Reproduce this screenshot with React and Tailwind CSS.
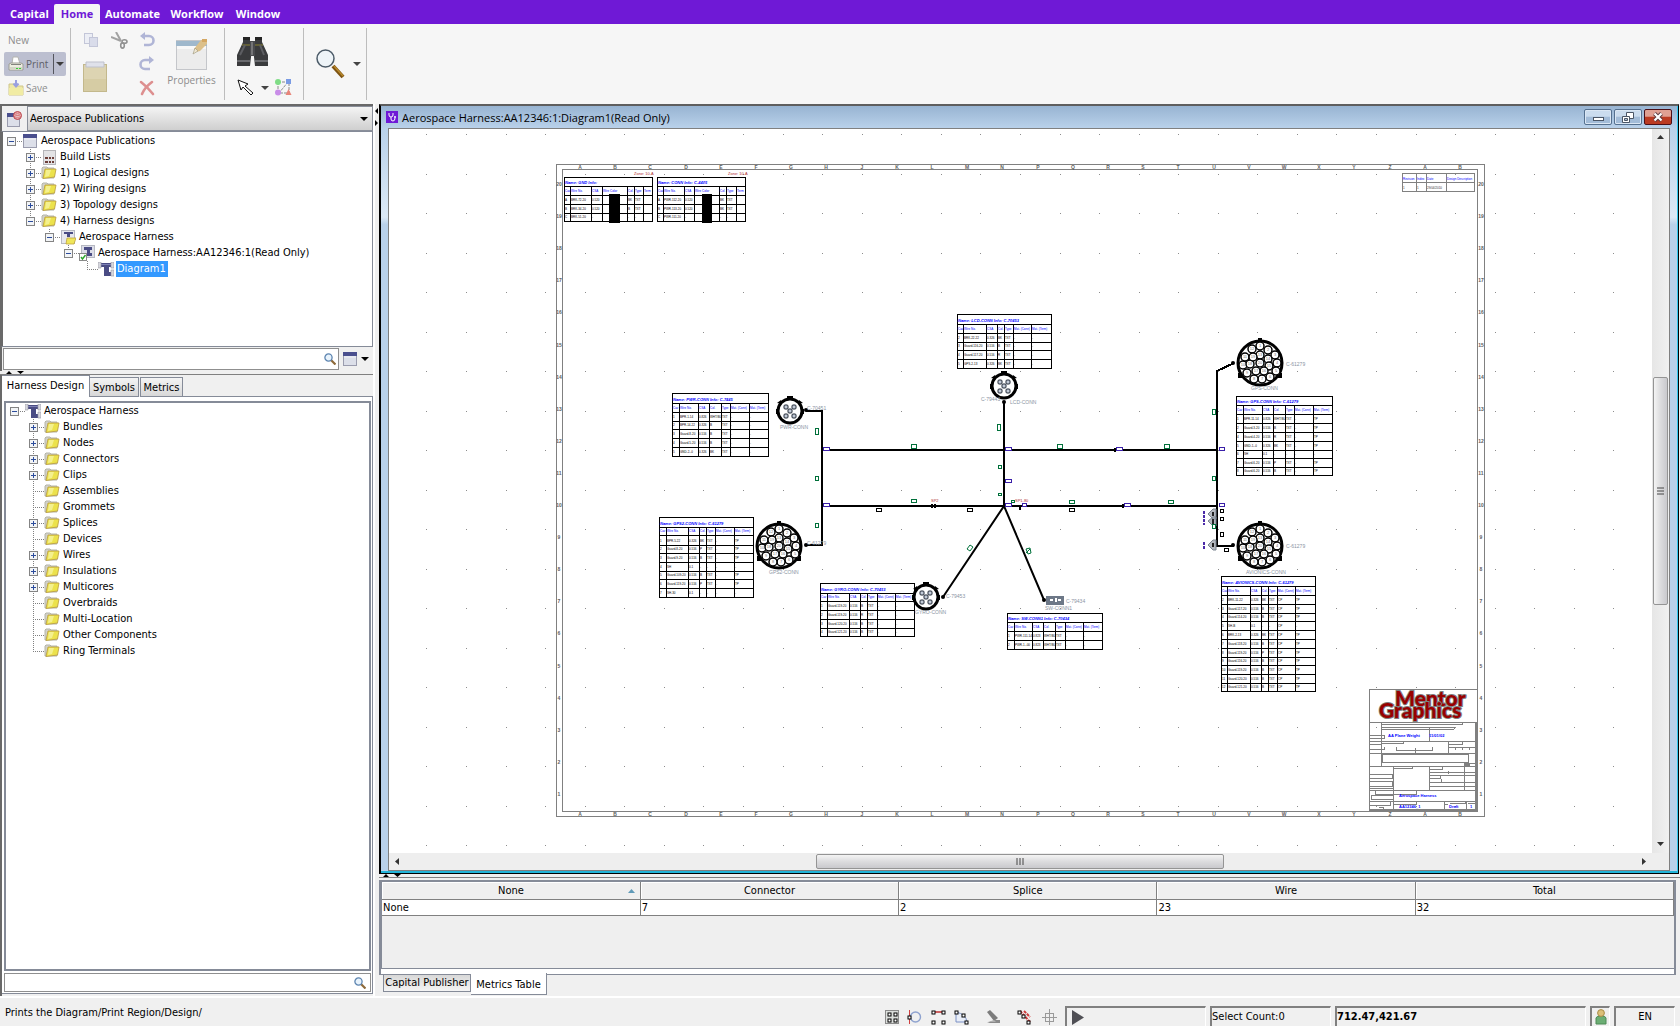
import React from "react";

/* ---------- small icons ---------- */

const Caret = ({ className = "" }) => (
  <svg width="8" height="4" viewBox="0 0 8 4" className={className} aria-hidden="true">
    <path d="M0 0h8L4 4z" fill="currentColor" />
  </svg>
);

const FolderIcon = () => (
  <svg width="16" height="14" viewBox="0 0 16 14" aria-hidden="true">
    <path d="M1 2 2 1h4l1 1h6v10H1z" fill="#d2d2ca" stroke="#b4b4a8" />
    <path d="M4 3h11l-1.500 8L2 12.500z" fill="#ece24c" stroke="#b99a3c" strokeWidth=".8" />
    <path d="M5 4h5l-2 6-4 1z" fill="#f4f08e" />
  </svg>
);

const WindowIcon = () => (
  <svg width="14" height="14" viewBox="0 0 14 14" aria-hidden="true">
    <rect x=".5" y=".5" width="13" height="13" fill="#dcdfe9" stroke="#9a9cae" />
    <rect width="14" height="4" fill="#4a4f8e" />
    <path d="M1 5h12" stroke="#f2f3f8" />
  </svg>
);

const HarnessIcon = () => (
  <svg width="16" height="15" viewBox="0 0 16 15" aria-hidden="true">
    <path d="M2 1h12v4h-3v5h3v4H6V5H2z" fill="#4a4c84" />
    <path d="M3 2h10v1H3z" fill="#7d80b4" />
    <path d="M0 0h3v6H0zM13 0h3v6h-3zM13 8h3v6h-3z" fill="#d7d8de" stroke="#9799a2" strokeWidth=".6" />
  </svg>
);

const BuildIcon = () => (
  <svg width="13" height="15" viewBox="0 0 13 15" aria-hidden="true">
    <rect x=".5" y=".5" width="12" height="14" fill="#e3e3e5" stroke="#b4b4b8" />
    <path d="M2 7h3v2H2zM6 7h2v2H6zM9 7h2v2H9zM2 11h3v2H2zM6 11h2v2H6zM9 11h2v2H9z" fill="#6d3f3a" />
  </svg>
);

const HarnessFolderIcon = () => (
  <svg width="15" height="15" viewBox="0 0 15 15" aria-hidden="true">
    <rect x=".5" y=".5" width="13" height="13" fill="#e6e7ee" stroke="#b6b8c2" />
    <path d="M3 2h9v2H9v3H6V4H3z" fill="#4a4c84" />
    <path d="M6 8h9l-2 6H5z" fill="#efe65a" stroke="#c2a43c" strokeWidth=".8" />
  </svg>
);

const HarnessCheckIcon = () => (
  <svg width="16" height="16" viewBox="0 0 16 16" aria-hidden="true">
    <rect x="2.500" y=".5" width="13" height="12" fill="#dcdde8" stroke="#b6b8c2" />
    <path d="M5 2h8v3h-2v3h2v3H8V5H5z" fill="#4a4c84" />
    <rect x=".5" y="8.500" width="7" height="7" fill="#fff" stroke="#8a8a8a" />
    <path d="m2 12 1.500 2L6.500 10" stroke="#2aa52a" strokeWidth="1.400" fill="none" />
  </svg>
);

const SearchIcon = () => (
  <svg width="12" height="12" viewBox="0 0 12 12" aria-hidden="true">
    <path d="m6.500 6.500 5 5" stroke="#8d6a3a" strokeWidth="2.200" />
    <circle cx="4.500" cy="4.500" r="3.600" fill="#e8f3fc" stroke="#5c84b0" strokeWidth="1.300" />
  </svg>
);

const treeIcons = {
  folder: FolderIcon,
  window: WindowIcon,
  harness: HarnessIcon,
  build: BuildIcon,
  harnessFolder: HarnessFolderIcon,
  harnessCheck: HarnessCheckIcon,
};

/* ---------- trees ---------- */

const indents = ["pl-1", "pl-[23px]", "pl-[42px]", "pl-[61px]", "pl-20"];

function Gutter({ mark, top, bottom }) {
  return (
    <svg width="15" height="16" viewBox="0 0 15 16" shapeRendering="crispEdges" aria-hidden="true">
      {top && <path d="M4.500 0v8" stroke="#808080" strokeDasharray="1 1" />}
      {bottom && <path d="M4.500 8v8" stroke="#808080" strokeDasharray="1 1" />}
      <path d="M4 8.500h11" stroke="#808080" strokeDasharray="1 1" />
      {mark && (
        <>
          <rect x=".5" y="4.500" width="8" height="8" fill="#f2f4f6" stroke="#848484" />
          <path d="M2 8.500h5" stroke="#2c4c9c" />
          {mark === "+" && <path d="M4.500 6v5" stroke="#2c4c9c" />}
        </>
      )}
    </svg>
  );
}

function TreeRow({ level, mark, icon, text, last, selected }) {
  const Icon = treeIcons[icon];
  return (
    <li className={"flex h-4 items-center whitespace-nowrap " + indents[level]}>
      {mark ? (
        <button type="button" aria-label={(mark === "+" ? "Expand " : "Collapse ") + text} className="flex">
          <Gutter mark={mark} top={level > 0} bottom={level > 0 && !last} />
        </button>
      ) : (
        <Gutter top bottom={!last} />
      )}
      <span className="flex w-4 justify-center">
        <Icon />
      </span>
      <span className={selected ? "ml-0.5 h-4 bg-[#3399ff] pr-0.5 pl-px leading-4 text-white" : "pl-[3px] leading-4"}>{text}</span>
    </li>
  );
}

const projectTree = [
  { level: 0, mark: "-", icon: "window", text: "Aerospace Publications" },
  { level: 1, mark: "+", icon: "build", text: "Build Lists" },
  { level: 1, mark: "+", icon: "folder", text: "1) Logical designs" },
  { level: 1, mark: "+", icon: "folder", text: "2) Wiring designs" },
  { level: 1, mark: "+", icon: "folder", text: "3) Topology designs" },
  { level: 1, mark: "-", icon: "folder", text: "4) Harness designs", last: true },
  { level: 2, mark: "-", icon: "harnessFolder", text: "Aerospace Harness", last: true },
  { level: 3, mark: "-", icon: "harnessCheck", text: "Aerospace Harness:AA12346:1(Read Only)", last: true },
  { level: 4, icon: "harness", text: "Diagram1", last: true, selected: true },
];

const designTree = [
  { level: 0, mark: "-", icon: "harness", text: "Aerospace Harness" },
  ...[
    ["Bundles", "+"],
    ["Nodes", "+"],
    ["Connectors", "+"],
    ["Clips", "+"],
    ["Assemblies"],
    ["Grommets"],
    ["Splices", "+"],
    ["Devices"],
    ["Wires", "+"],
    ["Insulations", "+"],
    ["Multicores", "+"],
    ["Overbraids"],
    ["Multi-Location"],
    ["Other Components"],
    ["Ring Terminals"],
  ].map(([text, mark], i) => ({ level: 1, icon: "folder", text, mark, last: i === 14 })),
];

/* ---------- header ---------- */

function MenuBar() {
  const item = "h-5 font-bold text-white";
  return (
    <nav className="flex h-6 shrink-0 items-end bg-[#6f19d6] pl-2.5 font-['Open_Sans',sans-serif] text-[11px]">
      <button type="button" className={item + " w-11 text-left"}>Capital</button>
      <button type="button" className="h-5 w-[46px] rounded-t-xs bg-[#f6f6f6] font-bold text-[#6f19d6]">Home</button>
      <button type="button" className={item + " w-[65px] "}>Automate</button>
      <button type="button" className={item + " w-16"}>Workflow</button>
      <button type="button" className={item + " w-[58px]"}>Window</button>
    </nav>
  );
}

const Divider = () => <div className="my-1 w-px shrink-0 bg-[#bdbdbd]" />;

const PrinterIcon = () => (
  <svg width="16" height="16" viewBox="0 0 16 16" aria-hidden="true">
    <path d="M4 8 5 1h5l2 7z" fill="#fff" stroke="#b4b4b0" />
    <path d="M1 8l2-1h10l2 1v6H1z" fill="#eceddf" stroke="#9c9c94" />
    <path d="M3 8h10v1H3z" fill="#84847e" />
    <path d="M2 11h12v3H2z" fill="#d3d5c6" />
    <path d="M8 12h2v1H8zM11 12h2v1h-2z" fill="#35d035" />
  </svg>
);

const SaveIcon = () => (
  <svg width="16" height="16" viewBox="0 0 16 16" aria-hidden="true">
    <path d="M1 4h5l1 2h8v9H1z" fill="#efe9a8" stroke="#cfc68a" />
    <path d="M1 8h14v7H1z" fill="#f1eca4" />
    <path d="M8 0v5M5.500 3.500 8 6.500l2.500-3" stroke="#9aa0e0" strokeWidth="2" fill="none" />
  </svg>
);

const Disabled = ({ label, children, className = "" }) => (
  <button type="button" aria-label={label} className={"flex " + className}>{children}</button>
);

function Ribbon() {
  return (
    <div className="flex h-20 shrink-0 bg-[#f6f6f6] font-['Open_Sans',sans-serif] text-[10px] leading-4 text-[#8d8d8d]">
      <div className="flex w-[70px] shrink-0 flex-col items-start pl-1">
        <button type="button" className="mt-2 h-4 pl-1">New</button>
        <div className="mt-1 flex h-6 w-[62px] items-center rounded-xs bg-[#bcbfd0] text-[#5f6068]">
          <button type="button" className="flex w-[49px] items-center gap-0.5 pl-1">
            <PrinterIcon />
            Print
          </button>
          <span className="h-5 w-px bg-[#55565e]" />
          <button type="button" aria-label="Print options" className="flex flex-1 justify-center text-[#3c3c3c]">
            <Caret />
          </button>
        </div>
        <button type="button" className="mt-1 flex h-4 items-center gap-0.5 pl-1">
          <SaveIcon />
          Save
        </button>
      </div>
      <Divider />

      <div className="flex w-[153px] shrink-0 pl-3">
        <div className="flex w-[52px] flex-col">
          <div className="flex gap-3 pt-2">
            <Disabled label="Copy">
              <svg width="16" height="16" viewBox="0 0 16 16">
                <rect x="1.500" y="1.500" width="8" height="10" fill="#eceef5" stroke="#c3c6d8" />
                <rect x="6.500" y="5.500" width="8" height="9" fill="#d9dcea" stroke="#c3c6d8" />
              </svg>
            </Disabled>
            <Disabled label="Cut">
              <svg width="17" height="17" viewBox="0 0 17 17" fill="none">
                <path d="m5 0 5 9M0 5l10 4" stroke="#a2a2a2" strokeWidth="2" />
                <ellipse cx="13.500" cy="9.500" rx="2.500" ry="1.800" stroke="#929292" strokeWidth="1.600" />
                <ellipse cx="11.500" cy="13.500" rx="1.800" ry="2.600" stroke="#929292" strokeWidth="1.600" />
              </svg>
            </Disabled>
          </div>
          <Disabled label="Paste" className="mt-3">
            <svg width="24" height="31" viewBox="0 0 24 31">
              <rect x=".5" y="3.500" width="23" height="27" fill="#d6cca4" stroke="#c3b88c" />
              <path d="M1 4h22v14H1z" fill="#ddd4b2" />
              <path d="M3 1h18v5H3z" fill="#dfe1ea" stroke="#bfc1cc" />
            </svg>
          </Disabled>
        </div>
        <div className="flex w-6 flex-col items-center gap-2 pt-2">
          <Disabled label="Undo">
            <svg width="16" height="16" viewBox="0 0 16 16" fill="none" stroke="#b0b5d6">
              <path d="M3 4h7a4 4 0 0 1 0 9H5" strokeWidth="2.600" />
              <path d="M6 0v8L1 4z" fill="#b0b5d6" stroke="none" />
            </svg>
          </Disabled>
          <Disabled label="Redo">
            <svg width="16" height="16" viewBox="0 0 16 16" fill="none" stroke="#b0b5d6">
              <path d="M13 4H6a4 4 0 0 0 0 9h5" strokeWidth="2.600" />
              <path d="M10 0v8l5-4z" fill="#b0b5d6" stroke="none" />
            </svg>
          </Disabled>
          <Disabled label="Delete">
            <svg width="16" height="16" viewBox="0 0 16 16" fill="none" stroke="#dd8f8f" strokeLinecap="round">
              <path d="M2 2c4 3 8 7 12 12" strokeWidth="2.600" />
              <path d="M13 2C9 5 5 9 3 14" strokeWidth="2.600" />
            </svg>
          </Disabled>
        </div>
        <button type="button" className="flex flex-1 flex-col items-center pt-3">
          <svg width="32" height="34" viewBox="0 0 32 34" aria-hidden="true">
            <rect x=".5" y="4.500" width="30" height="29" fill="#ececec" stroke="#c4c6ca" />
            <path d="M0 5h31v5H0z" fill="#9fb8cc" />
            <path d="M1 10h29v3H1z" fill="#f8f8f8" />
            <path d="M25 4h6v4l-7 7-4 1-2-3z" fill="#dcc08a" />
            <path d="M26 3h5v3h-5z" fill="#d4a763" />
            <path d="m19 12 3 3-5 3z" fill="#efe7d2" stroke="#9a9478" strokeWidth=".6" />
          </svg>
          <span className="mt-0.5">Properties</span>
        </button>
      </div>
      <Divider />

      <div className="flex w-[78px] shrink-0 flex-col pl-3">
        <button type="button" aria-label="Find" className="mt-3 flex">
          <svg width="31" height="31" viewBox="0 0 31 31">
            <path d="M6 1h7v5l2 6-2 18H0V19L6 6zM18 1h7v5l6 13v11H18l-2-18 2-6z" fill="#3a3b3d" />
            <path d="M13 5h5v15h-5z" fill="#4a4b4e" />
            <path d="M6 1h7v3H6zM18 1h7v3h-7z" fill="#242424" />
            <path d="M5 9h8M18 9h8" stroke="#8c8434" />
            <path d="M15 6v13" stroke="#a0a0a0" />
            <path d="M0 25h13M18 25h13" stroke="#6a6b6f" strokeWidth="2" />
            <path d="M3 19 8 9M23 9l4 10" stroke="#5d5e62" strokeWidth="2" />
          </svg>
        </button>
        <div className="mt-3 flex items-center">
          <button type="button" aria-label="Select" className="flex">
            <svg width="17" height="17" viewBox="0 0 17 17">
              <path d="M1 1l10 4-3 2 8 7-2 2-8-8-2 3z" fill="#fff" stroke="#111" />
            </svg>
          </button>
          <Caret className="ml-[7px] text-[#444]" />
          <button type="button" aria-label="Select connected" className="ml-1.5 flex">
            <svg width="17" height="17" viewBox="0 0 17 17">
              <path d="M3 3h11M3 3v11M13 3 4 14M14 4v9M5 14h8" stroke="#8a8a8a" strokeDasharray="3 1" />
              <circle cx="3" cy="3" r="3" fill="#7fdc86" />
              <path d="M11 0h5v5h-5z" fill="#7a9be4" />
              <circle cx="3" cy="13.500" r="3" fill="#c98de8" />
              <path d="m13.500 10 3 6h-6z" fill="#e8857a" />
            </svg>
          </button>
        </div>
      </div>
      <Divider />

      <div className="flex w-[62px] shrink-0 items-center gap-2 pl-3">
        <button type="button" aria-label="Zoom" className="flex">
          <svg width="29" height="30" viewBox="0 0 29 30">
            <path d="m17 17 10 11" stroke="#7d5312" strokeWidth="4" />
            <path d="m18 17 9 10" stroke="#b98a2c" strokeWidth="1.500" />
            <circle cx="9.500" cy="9.500" r="8.500" fill="#eef4f8" stroke="#4c5b68" strokeWidth="1.500" />
          </svg>
        </button>
        <Caret className="text-[#444]" />
      </div>
      <Divider />
    </div>
  );
}

/* ---------- left side ---------- */

const SplitArrows = () => (
  <svg width="20" height="3" viewBox="0 0 20 3" aria-hidden="true">
    <path d="M0 3h6L3 0zM11 0h7l-3.500 3z" fill="#000" />
  </svg>
);

function LeftPanel() {
  return (
    <aside className="flex w-[375px] shrink-0 flex-col border-r-2 border-white">
      <div className="flex h-[27px] shrink-0 border-t-2 border-l-2 border-[#696969]">
        <button type="button" aria-label="Close project" className="flex w-[25px] items-center justify-center">
          <svg width="15" height="16" viewBox="0 0 15 16">
            <rect x=".5" y="2.500" width="12" height="13" fill="#dcdfe9" stroke="#9a9cae" />
            <path d="M0 2h13v4H0z" fill="#4a4f8e" />
            <circle cx="10.500" cy="4.500" r="4" fill="#e9a2a4" stroke="#b8444a" />
            <path d="M8 5h5v1H8zM9 3h3v1H9z" fill="#fff" stroke="#b8444a" strokeWidth=".4" />
          </svg>
        </button>
        <div className="relative flex-1">
          <select aria-label="Project" className="h-[25px] w-full appearance-none border border-[#8a8f9a] bg-linear-to-b from-[#f4f4f4] to-[#cfcfcf] pt-px pl-0.5 outline-none">
            <option>Aerospace Publications</option>
          </select>
          <Caret className="pointer-events-none absolute top-[11px] right-[5px] text-black" />
        </div>
      </div>
      <ul className="h-[216px] shrink-0 border-t border-r border-b border-l-3 border-[#858b98] border-l-[#696969] bg-white pt-px">
        {projectTree.map((n) => (
          <TreeRow key={n.text} {...n} />
        ))}
      </ul>
      <div className="flex h-6 shrink-0 items-center border-l-2 border-[#696969] pl-px">
        <label className="flex h-[22px] w-[336px] items-center border border-[#8f8f8f] bg-white pr-0.5">
          <input type="text" aria-label="Filter projects" className="h-5 min-w-0 flex-1 px-1 outline-none" />
          <SearchIcon />
        </label>
        <button type="button" aria-label="View options" className="ml-1 flex items-center gap-1 text-black">
          <WindowIcon />
          <Caret />
        </button>
      </div>
      <div className="h-1 shrink-0 border-b border-[#808080] pl-1.5">
        <SplitArrows />
      </div>
      <div className="flex min-h-0 flex-1 flex-col border-l-2 border-[#696969] pb-0.5">
        <div role="tablist" className="flex h-[22px] shrink-0 items-end">
          <button type="button" role="tab" aria-selected="true" className="h-[22px] w-[88px] border-t border-r border-[#858b98] bg-white">
            Harness Design
          </button>
          <button type="button" role="tab" aria-selected="false" className="h-5 w-[49px] border-t border-r border-b border-[#858b98] bg-linear-to-b from-[#f4f4f4] to-[#d8d8d8] pt-0.5">
            Symbols
          </button>
          <button type="button" role="tab" aria-selected="false" className="ml-px h-5 w-[43px] border border-[#858b98] bg-linear-to-b from-[#f4f4f4] to-[#d8d8d8] pt-0.5">
            Metrics
          </button>
          <span className="flex-1 self-end border-b border-[#858b98]" />
        </div>
        <div className="flex min-h-0 flex-1 flex-col border-r border-b border-[#858b98] bg-white p-px pt-1 pl-0.5">
          <ul className="min-h-0 flex-1 overflow-hidden border-2 border-[#858b98] bg-white">
            {designTree.map((n) => (
              <TreeRow key={n.text} {...n} />
            ))}
          </ul>
          <label className="mt-0.5 flex h-[19px] shrink-0 items-center border border-[#8f8f8f] bg-white pr-1">
            <input type="text" aria-label="Filter design" className="h-4 min-w-0 flex-1 px-1 outline-none" />
            <SearchIcon />
          </label>
        </div>
      </div>
    </aside>
  );
}

/* ---------- diagram ---------- */

const heads = ["Cav", "Wire No.", "CSA", "Col.", "Type", "Mat. (Conn)", "Mat. (Term)"];
const pinHeads = ["Cav", "Wire No.", "CSA", "Wire Color", "", "Col.", "Type", "Term"];

const wireTables = [
  {
    title: "Name: GND Info:", h: pinHeads, blot: [609, 11],
    xs: [564, 570, 591, 602, 619, 627, 634, 643, 652], ys: [177, 186, 195, 204, 213, 221],
    rows: [["A", "BRK-72-20", "0.520", "", "", "BK", "TXT"], ["B", "BRK-34-20", "0.520", "", "", "B", "TXT"], ["C", "BRK-51-20", "-", "", "", "-", "-"]],
  },
  {
    title: "Name: CONN Info: C-4405", h: pinHeads, blot: [702, 10],
    xs: [657, 663, 684, 694, 712, 719, 726, 736, 745], ys: [177, 186, 195, 204, 213, 221],
    rows: [["A", "PWR-112-20", "0.520", "", "", "BK", "TXT"], ["B", "PWR-113-20", "0.520", "", "", "BK", "TXT"], ["C", "PWR-111-20", "-", "", "", "-", "-"]],
  },
  {
    title: "Name: LCD-CONN Info: C-70453", h: heads,
    xs: [957, 963, 986, 997, 1004, 1013, 1031, 1051], ys: [314, 324, 333, 342, 350, 359, 368],
    rows: [["2", "BRK-22-22", "0.326", "BK", "TXT", "-", "-"], ["3", "Guard-116-20", "0.516", "B", "TXT", "-", "-"], ["4", "Guard-117-20", "0.516", "R", "TXT", "-", "-"], ["5", "GPS-2-13", "0.326", "BK", "TXT", "-", "-"]],
  },
  {
    title: "Name: PWR-CONN Info: C-7445", h: heads,
    xs: [672, 679, 698, 709, 721, 730, 749, 768], ys: [393, 403, 412, 421, 429, 438, 447, 456],
    rows: [["1", "BPR-1-14", "0.826", "WHT/BL", "TXT", "-", "-"], ["2", "BPR-14-22", "0.326", "B", "TXT", "-", "-"], ["3", "Guard-8-20", "0.516", "B", "TXT", "-", "-"], ["4", "Guard-5-20", "0.516", "B", "TXT", "-", "-"], ["5", "GND-2--0", "0.326", "BK", "TXT", "-", "-"]],
  },
  {
    title: "Name: GPS2-CONN Info: C-61279", h: heads,
    xs: [659, 666, 688, 699, 706, 715, 734, 753], ys: [517, 527, 535, 545, 553, 562, 571, 579, 588, 597],
    rows: [["1", "BPR-5-22", "0.326", "BK", "TXT", "-", "TP"], ["2", "Guard-8-20", "0.516", "P", "TXT", "-", "TP"], ["3", "Guard-9-20", "0.516", "B", "TXT", "-", "TP"], ["4", "SH", "0.1", "-", "-", "-", "-"], ["5", "Guard-109-20", "0.516", "B", "TXT", "-", "TP"], ["6", "Guard-119-20", "0.516", "P", "TXT", "-", "TP"], ["7", "SH-30", "0.1", "-", "-", "-", "-"]],
  },
  {
    title: "Name: GYRO-CONN Info: C-70453", h: heads,
    xs: [820, 827, 849, 860, 867, 877, 895, 914], ys: [583, 593, 601, 610, 619, 628, 636],
    rows: [["1", "Guard-119-20", "0.516", "B", "TXT", "-", "-"], ["2", "Guard-119-20", "0.516", "R", "TXT", "-", "-"], ["3", "Guard-120-20", "0.516", "B", "TXT", "-", "-"], ["4", "Guard-121-20", "0.516", "B", "TXT", "-", "-"]],
  },
  {
    title: "Name: SW-CONN1 Info: C-70434", h: heads,
    xs: [1007, 1014, 1032, 1043, 1055, 1065, 1083, 1102], ys: [613, 622, 631, 640, 649],
    rows: [["1", "PWR-111-14", "0.823", "WHT/BL", "TXT", "-", "-"], ["2", "PWR-1--00", "0.823", "WHT/BL", "TXT", "-", "-"]],
  },
  {
    title: "Name: GPS-CONN Info: C-61279", h: heads,
    xs: [1236, 1243, 1262, 1273, 1285, 1294, 1313, 1332], ys: [396, 405, 414, 423, 432, 441, 450, 458, 467, 475],
    rows: [["1", "BPR-11-14", "0.826", "WHT/BL", "TXT", "-", "TP"], ["2", "Guard-3-20", "0.516", "B", "TXT", "-", "TP"], ["4", "Guard-4-20", "0.516", "R", "TXT", "-", "TP"], ["5", "GND-1--0", "0.326", "BK", "TXT", "-", "TP"], ["6", "SH", "0.1", "-", "-", "-", "-"], ["7", "Guard-6-20", "0.516", "P", "TXT", "-", "TP"], ["8", "Guard-6-20", "0.516", "B", "TXT", "-", "TP"]],
  },
  {
    title: "Name: AVIONICS-CONN Info: C-61279", h: heads,
    xs: [1221, 1227, 1250, 1261, 1268, 1277, 1295, 1315], ys: [576, 586, 595, 604, 613, 621, 630, 639, 648, 657, 665, 674, 683, 691],
    rows: [["2", "BRK-11-22", "0.326", "BK", "TXT", "CP", "TP"], ["3", "Guard-117-20", "0.516", "B", "TXT", "CP", "TP"], ["4", "Guard-114-20", "0.516", "B", "TXT", "CP", "TP"], ["5", "SH-B", "0.1", "-", "-", "CP", "-"], ["6", "BRK-2-13", "0.326", "BK", "TXT", "CP", "TP"], ["7", "Guard-118-20", "0.516", "B", "TXT", "CP", "TP"], ["8", "Guard-119-20", "0.516", "P", "TXT", "CP", "TP"], ["9", "Guard-116-20", "0.516", "B", "TXT", "CP", "TP"], ["10", "Guard-119-20", "0.516", "B", "TXT", "CP", "TP"], ["11", "Guard-120-20", "0.516", "B", "TXT", "CP", "TP"], ["12", "Guard-121-20", "0.516", "B", "TXT", "CP", "TP"]],
  },
];

function WireTable({ title, h, xs, ys, rows, blot }) {
  const right = xs[xs.length - 1];
  const bottom = ys[ys.length - 1];
  return (
    <g>
      <g stroke="#000" fill="none" shapeRendering="crispEdges">
        <rect x={xs[0]} y={ys[0]} width={right - xs[0]} height={bottom - ys[0]} fill="#fff" />
        {ys.slice(1, -1).map((y) => <path key={y} d={`M${xs[0]} ${y}H${right}`} />)}
        {xs.slice(1, -1).map((x) => (blot && x === xs[4] ? null : <path key={x} d={`M${x} ${ys[1]}V${bottom}`} />))}
      </g>
      <text x={xs[0] + 1} y={ys[1] - 2} className="text-[4px] font-bold italic" fill="#0000ff">{title}</text>
      {h.map((t, i) => <text key={i} x={xs[i] + 1} y={ys[2] - 3} className="text-[3px]" fill="#0000ff">{t}</text>)}
      {rows.map((r, j) => r.map((t, i) => <text key={j + "-" + i} x={xs[i] + 1} y={ys[j + 3] - 3} className="text-[3px]" fill="#000">{t}</text>))}
      {blot && <rect x={blot[0]} y="194" width={blot[1]} height="29" fill="#000" />}
    </g>
  );
}

const bigPins = [
  [0, -17], [8, -13], [15, -8], [17, 0], [16, 8], [10, 14], [2, 16], [-6, 16], [-13, 10], [-17, 2], [-15, -6],
  [-8, -14], [0, -8], [8, -4], [9, 3], [4, 8], [-4, 8], [-10, 1], [-7, -6], [0, 0],
];

const BigConnector = ({ x, y }) => (
  <g transform={`translate(${x} ${y})`}>
    <path d="M-2-25h4v5h-4zM-22 10l6 0v5h-6zM16 10h6v5h-6z" fill="#000" />
    <circle r="22" fill="#fff" stroke="#000" strokeWidth="3" />
    {bigPins.map(([px, py], i) => (
      <g key={i}>
        <circle cx={px} cy={py} r="4" fill="#fff" stroke="#000" strokeWidth="1.500" />
        <text x={px} y={py + 1} textAnchor="middle" className="text-[4px]" fill="#777">{i + 1}</text>
      </g>
    ))}
  </g>
);

const SmallConnector = ({ x, y }) => (
  <g transform={`translate(${x} ${y})`}>
    <path d="M-3-15h6v4h-6zM-13-8l4-3 2 4zM13-8l-4-3-2 4zM-14-2h3v5h-3zM11-2h3v5h-3z" fill="#000" />
    <circle r="12" fill="#fff" stroke="#000" strokeWidth="3" />
    {[[-4, -4], [4, -4], [0, 0], [-4, 5], [4, 5]].map(([px, py]) => (
      <rect key={px + "," + py} x={px - 2} y={py - 2} width="4" height="4" rx="1" fill="#c3cbd8" stroke="#222a36" strokeWidth="1" />
    ))}
  </g>
);

const green = [
  [815, 428, 3, 6], [815, 476, 3, 4], [815, 523, 3, 4], [911, 444, 5, 4], [911, 499, 5, 3], [997, 424, 3, 6], [998, 465, 3, 3],
  [998, 493, 3, 2], [1057, 444, 5, 4], [1069, 500, 5, 3], [1011, 500, 3, 2], [1212, 409, 3, 5], [1212, 476, 3, 4], [1164, 444, 5, 4],
  [1168, 500, 5, 3], [1212, 524, 3, 4],
];
const violet = [
  [823, 447, 6, 3], [823, 503, 6, 3], [1005, 447, 6, 3], [1005, 479, 6, 3], [1005, 503, 6, 3], [1022, 503, 4, 3], [1116, 447, 6, 3],
  [1124, 503, 6, 3], [1219, 447, 5, 3], [1219, 503, 5, 3],
];
const black = [[876, 508, 5, 3], [967, 508, 5, 3], [1069, 508, 5, 3], [1220, 509, 3, 3], [1220, 517, 3, 3], [1220, 532, 3, 4], [1224, 548, 4, 3]];
const nodes = [[822, 450], [822, 506], [1004, 450], [1004, 482], [1004, 506], [1115, 450], [1123, 506], [1217, 450], [1217, 506], [1217, 514], [1217, 522], [1217, 545], [932, 506], [935, 506], [1020, 508]];
const ends = [[806, 410], [806, 545], [1004, 402], [943, 597], [1044, 600], [1233, 363], [1233, 545]];
const tags = [
  [807, 410, "C-70451"], [780, 429, "PWR-CONN"], [769, 574, "GPS2-CONN"], [807, 545, "C-61279"], [981, 401, "C-79443"], [1010, 404, "LCD-CONN"],
  [946, 598, "C-79453"], [915, 614, "GYRO-CONN"], [1066, 603, "C-79434"], [1045, 610, "SW-CONN1"], [1286, 366, "C-61279"], [1251, 390, "GPS-CONN"],
  [1286, 548, "C-61279"], [1246, 574, "AVIONICS-CONN"],
];

const Boxes = ({ items, color }) => (
  <g fill="#fff" stroke={color} shapeRendering="crispEdges">
    {items.map(([x, y, w, h]) => <rect key={x + "-" + y} x={x} y={y} width={w} height={h} />)}
  </g>
);

function TitleBlock() {
  return (
    <g transform="translate(1369 689)">
      <g stroke="#808080" fill="none" shapeRendering="crispEdges">
        <path d="M0 0h108v122H0zM0 33h108M12 33v44M12 35h81v-2M12 38h73v2M13 40h72M60 38v14M0 46h15v3H0M0 52h108M12 54h22v-2M79 52v12M80 55h13v-3M0 55h12M0 60h15v-2M27 58v3h36v-3M46 59v5M79 58h28M86 58v3M93 58v3M100 58v3M0 64h108M13 65h86v8H13zM95 74h12v3M0 77h108M24 77v24M24 79h19v-2M60 77v24M60 80h13v-2M95 77v24M60 83h47M79 82v3M60 86h47M60 89h11v-3M60 93h12v-3M60 93h47M60 97h47M0 85h23v4H0M0 92h23v5H0M0 99h24M0 101h108M6 101v4h18M24 101v21M24 105h23v-4M2 106h22v4H2zM0 112h108M24 115h23v-3M0 116h21v-4M10 118h4v4M75 112v10M75 115h4M81 114h15v-2M97 112v10M99 114h8v-2" />
        <path d="M0 121h108M107 33v89" strokeWidth="2" />
        <path d="M95 75h5v2h-5z" fill="#808080" />
      </g>
      <g className="font-['Lato',sans-serif] text-[21px] font-black" fill="#990000" stroke="#808080" strokeWidth="2" paintOrder="stroke">
        <text x="26" y="17">Mentor</text>
        <text x="10" y="29">Graphics</text>
      </g>
      <g className="text-[4px] font-bold" fill="#0000ff">
        <text x="19" y="48">AA Plane Weight</text>
        <text x="60" y="48">11/01/02</text>
        <text x="30" y="108">Aerospace Harness</text>
        <text x="30" y="119">AA12346_1</text>
        <text x="80" y="119">Draft</text>
        <text x="101" y="119">1</text>
      </g>
    </g>
  );
}

function Diagram() {
  const dots = [];
  for (let i = 0; i < 32; i++) for (let j = 0; j < 19; j++) dots.push([Math.round(1653 - (i * 1187) / 30), Math.round(134 + j * 39.5)]);
  const letters = "ABCDEFGHJKLMNPQRSTUVWXYZAB".split("");
  const numbers = Array.from({ length: 20 }, (_, i) => i + 1);
  return (
    <svg className="block h-full w-full" role="img" aria-label="Harness diagram">
      <g transform="translate(-389 -129)" className="font-['Liberation_Sans',sans-serif]">
        <g fill="#8c8c8c">{dots.map(([x, y]) => <rect key={x + "-" + y} x={x} y={y} width="1" height="1" />)}</g>
        <g fill="none" stroke="#808080" shapeRendering="crispEdges">
          <rect x="556" y="164" width="928" height="652" />
          <rect x="562" y="169" width="915" height="642" />
        </g>
        <g className="text-[5px] font-bold" fill="#606060" textAnchor="middle">
          {letters.map((c, i) => {
            const x = Math.round(580 + i * 35.2);
            return (
              <g key={i}>
                <text x={x} y="169">{c}</text>
                <text x={x} y="816">{c}</text>
              </g>
            );
          })}
          {numbers.map((n) => {
            const y = Math.round(828 - n * 32.1);
            return (
              <g key={n}>
                <text x="559" y={y}>{n}</text>
                <text x="1481" y={y}>{n}</text>
              </g>
            );
          })}
        </g>

        {wireTables.map((t) => <WireTable key={t.title + t.xs[0]} {...t} />)}
        <g className="text-[4px]" fill="#b03030">
          <text x="634" y="175">Zone: 10-A</text>
          <text x="728" y="175">Zone: 10-A</text>
          <text x="931" y="502">SP2</text>
          <text x="1015" y="502">SP1-80</text>
        </g>

        <g stroke="#808080" fill="none" shapeRendering="crispEdges">
          <path d="M1402 173h72v18h-72zM1402 182h72M1416 173v18M1426 173v18M1446 173v18" />
        </g>
        <g className="text-[3px]" fill="#0000ff">
          <text x="1403" y="180">Revision</text>
          <text x="1417" y="180">Index</text>
          <text x="1427" y="180">Date</text>
          <text x="1447" y="180">Design Description</text>
          <g fill="#333">
            <text x="1403" y="189">1</text>
            <text x="1417" y="189">1</text>
            <text x="1427" y="189">29/04/2010</text>
          </g>
        </g>

        <g stroke="#000" strokeWidth="2" fill="none">
          <path d="M806 411H822V545H806M822 450H1217M822 506H1217M1004 402V506M1234 363L1217 371V546H1234" shapeRendering="crispEdges" />
          <path d="M1004 506L943 597M1004 506L1044 600" />
        </g>
        <g fill="#000">
          {nodes.map(([x, y]) => <rect key={x + "-" + y} x={x - 1} y={y - 2} width="2" height="4" />)}
          {ends.map(([x, y]) => <circle key={x + "-" + y} cx={x} cy={y} r="2" />)}
        </g>
        <g fill="#b4b8bf" stroke="#7b8490">
          <path d="M1208 514l5-5h3v10h-3zM1208 521l5-4h3v9h-3zM1208 545l5-5h3v10h-3z" />
          <path d="M1213 512v4M1213 519v5M1213 543v4" stroke="#222" strokeWidth="2" />
        </g>
        <g stroke="#4b2aa8" strokeWidth="2" strokeDasharray="3 1">
          <path d="M1204 511v14M1204 542v8" />
        </g>
        <Boxes items={green} color="#00703a" />
        <Boxes items={violet} color="#3a1fa8" />
        <Boxes items={black} color="#000" />
        <g fill="none" stroke="#00703a">
          <path d="M967 549l3-4 3 2-3 4zM1026 549l4-1 1 5-3 1zM1026 553l4-4" />
        </g>

        <BigConnector x={1260} y={363} />
        <BigConnector x={1260} y={546} />
        <BigConnector x={779} y={546} />
        <SmallConnector x={790} y={411} />
        <SmallConnector x={1004} y={386} />
        <SmallConnector x={926} y={597} />
        <rect x="1046" y="596" width="18" height="9" fill="#6d7887" />
        <path d="M1050 600h3M1056 598v4M1058 600h3" stroke="#fff" strokeWidth="2" />
        <g className="text-[5px]" fill="#8a94a3">
          {tags.map(([x, y, t]) => <text key={x + "-" + y} x={x} y={y}>{t}</text>)}
        </g>
        <TitleBlock />
      </g>
    </svg>
  );
}

/* ---------- diagram window ---------- */

const Arrow = ({ d, label }) => (
  <button type="button" aria-label={label} className="flex size-[17px] shrink-0 items-center justify-center">
    <svg width="7" height="7" viewBox="0 0 7 7"><path d={d} fill="#333" /></svg>
  </button>
);

const capButton = "flex h-4 w-7 items-center justify-center rounded-xs border border-[#55708f] bg-linear-to-b from-[#cbdcee] from-45% to-[#a3bcd8] to-50% shadow-[inset_0_0_0_1px_#dbe7f4]";

function DiagramWindow() {
  return (
    <section className="mr-px flex min-h-0 flex-1 flex-col border-t-2 border-r border-b border-l-2 border-black border-t-[#5e5e5e]">
      <div className="flex min-h-0 flex-1 flex-col border-r border-b-2 border-r-[#31c8ee] border-b-[#22b4d8] bg-[#b9d1ea]">
        <header className="flex h-[22px] shrink-0 items-center bg-linear-to-b from-[#98b4d2] to-[#b9d1ea] px-[5px]">
          <svg width="12" height="12" viewBox="0 0 12 12" aria-hidden="true">
            <rect width="12" height="12" fill="#6f19d6" />
            <path d="M3 2v2q0 2 2 2t2-2V2M5 6v2q0 2 2 2t2-3" stroke="#fff" fill="none" />
            <circle cx="9" cy="6" r="1" fill="#fff" />
          </svg>
          <h1 className="min-w-0 flex-1 pt-px pl-1 font-['Open_Sans',sans-serif] text-[11px] leading-5 text-black">Aerospace Harness:AA12346:1:Diagram1(Read Only)</h1>
          <div className="flex gap-0.5">
            <button type="button" aria-label="Minimize" className={capButton}>
              <svg width="11" height="5" viewBox="0 0 11 5" className="mt-1"><rect x=".5" y=".5" width="10" height="3" fill="#fff" stroke="#4b5666" /></svg>
            </button>
            <button type="button" aria-label="Restore" className={capButton}>
              <svg width="12" height="11" viewBox="0 0 12 11">
                <path d="M4.500.500h7v6h-7z" fill="#fff" stroke="#4b5666" />
                <path d="M.500 4.500h7v6h-7z" fill="#fff" stroke="#4b5666" />
                <path d="M2.500 6.500h3v2h-3z" fill="#a8bdd6" stroke="#4b5666" />
              </svg>
            </button>
            <button type="button" aria-label="Close" className="flex h-4 w-7 items-center justify-center rounded-xs border border-[#4c1018] bg-linear-to-b from-[#e0a093] from-45% to-[#bb3a22] to-50%">
              <svg width="12" height="10" viewBox="0 0 12 10">
                <path d="m2.500 1.500 7 7M9.500 1.500l-7 7" stroke="#5a3a40" strokeWidth="4" />
                <path d="m2.500 1.500 7 7M9.500 1.500l-7 7" stroke="#fff" strokeWidth="2.200" />
              </svg>
            </button>
          </div>
        </header>
        <div className="flex min-h-0 flex-1 bg-linear-to-b from-[#b9d1ea] from-0% via-[#dce9f6] via-12% to-[#b9d1ea] to-13% px-[7px]">
          <div className="flex min-h-0 min-w-0 flex-1 flex-col border border-[#808080] bg-[#eeeeee]">
            <div className="flex min-h-0 flex-1">
              <div className="min-h-0 min-w-0 flex-1 overflow-hidden bg-white">
                <Diagram />
              </div>
              <div className="flex w-[17px] shrink-0 flex-col bg-linear-to-r from-[#e6e6e6] to-[#f1f1f1]">
                <Arrow label="Scroll up" d="M0 5h7L3.500 1z" />
                <div className="flex-[231]" />
                <div className="mx-px flex flex-[226] items-center justify-center rounded-xs border border-[#949494] bg-linear-to-r from-[#f4f4f4] via-[#dcdcde] via-50% to-[#c9c9cd]">
                  <svg width="7" height="8" viewBox="0 0 7 8"><path d="M0 1h7M0 4h7M0 7h7" stroke="#444" /></svg>
                </div>
                <div className="flex-[231]" />
                <Arrow label="Scroll down" d="M0 1h7L3.500 5z" />
              </div>
            </div>
            <div className="flex h-[17px] shrink-0 pr-[17px]">
              <Arrow label="Scroll left" d="M5 0v7L1 3.500z" />
              <div className="flex-[411]" />
              <div className="my-px flex flex-[406] items-center justify-center rounded-xs border border-[#949494] bg-linear-to-b from-[#f4f4f4] via-[#dcdcde] via-50% to-[#c9c9cd]">
                <svg width="8" height="7" viewBox="0 0 8 7"><path d="M1 0v7M4 0v7M7 0v7" stroke="#444" /></svg>
              </div>
              <div className="flex-[412]" />
              <Arrow label="Scroll right" d="M2 0v7l4-3.500z" />
            </div>
          </div>
        </div>
      </div>
    </section>
  );
}

function MetricsPanel() {
  const cols = ["None", "Connector", "Splice", "Wire", "Total"];
  const row = ["None", "7", "2", "23", "32"];
  return (
    <section className="flex h-[122px] shrink-0 flex-col">
      <div className="h-1 shrink-0 border-b border-[#808080] pl-1">
        <SplitArrows />
      </div>
      <div className="mt-0.5 mr-1 flex h-[95px] shrink-0 flex-col border-t-2 border-r-2 border-b border-l-2 border-[#858b98] bg-white pb-[5px]">
        <div className="flex-1 border-b border-l border-[#858b98] bg-[#efefef]">
          <table className="w-full table-fixed border-collapse">
            <thead>
              <tr className="h-[17px]">
                {cols.map((c, i) => (
                  <th key={c} className="border-r border-b border-[#808080] bg-[#efefef] p-0 font-normal leading-4 shadow-[inset_1px_1px_0_#fff]">
                    <span className="flex items-center justify-center pt-px leading-[15px]">
                      {i === 0 && <span className="w-4" />}
                      <span className="flex-1">{c}</span>
                      {i === 0 && (
                        <svg width="16" height="4" viewBox="0 0 16 4" aria-hidden="true"><path d="M4 4l3.500-4L11 4z" fill="#5f9ab8" /></svg>
                      )}
                    </span>
                  </th>
                ))}
              </tr>
            </thead>
            <tbody>
              <tr className="h-4">
                {row.map((c, i) => (
                  <td key={i} className="border-r border-b border-[#808080] bg-white p-0 pl-px leading-[15px]">{c}</td>
                ))}
              </tr>
            </tbody>
          </table>
        </div>
      </div>
      <div role="tablist" className="flex items-start pl-1">
        <button type="button" role="tab" aria-selected="false" className="h-[17px] w-[88px] border-r border-b border-l border-[#858b98] bg-linear-to-b from-[#d8d8d8] to-[#f4f4f4]">
          Capital Publisher
        </button>
        <button type="button" role="tab" aria-selected="true" className="-mt-0.5 h-[22px] w-[76px] border-r border-b border-[#858b98] bg-white pt-1">
          Metrics Table
        </button>
      </div>
    </section>
  );
}

/* ---------- status bar ---------- */

const Sq = ({ x, y }) => <rect x={x - 1} y={y - 1} width="3" height="3" fill="#fff" stroke="#000" />;

const statusIcons = [
  ["Grid", <><rect x=".5" y="1.500" width="13" height="13" fill="#dcdfdc" stroke="#8a8a8a" /><Sq x={4} y={5} /><Sq x={10} y={5} /><Sq x={4} y={11} /><Sq x={10} y={11} /></>, "w-[22px]"],
  ["Snap to arc", <><circle cx="8.500" cy="8" r="5" fill="none" stroke="#8ea2cf" strokeWidth="1.400" /><path d="M2.500 1v14" stroke="#d04040" /><Sq x={2} y={8} /></>, "w-[24px]"],
  ["Snap to segment", <><path d="M2 3h10" stroke="#c03030" strokeWidth="1.500" /><Sq x={2} y={3} /><Sq x={12} y={3} /><Sq x={2} y={13} /><Sq x={12} y={13} /></>, "w-[23px]"],
  ["Snap to curve", <><path d="M2 3v10h11Q12 5 2 3z" fill="#e9eef8" stroke="#7a90c4" /><Sq x={2} y={3} /><Sq x={9} y={6} /><Sq x={12} y={13} /></>, "w-[32px]"],
  ["Highlight", <><path d="M1 14h13v-3H9z" fill="#8a8a8a" /><path d="M1 3 4 1l8 8-4 3z" fill="#7c7c7c" /><path d="M2 13h8l-2-2z" fill="#b0b0b0" /></>, "w-[31px]"],
  ["Measure", <><path d="m3 2 10 11M7 2l6 6" stroke="#cf3a3a" strokeWidth="2" strokeDasharray="3 1" /><Sq x={2} y={3} /><Sq x={6} y={7} /><Sq x={11} y={13} /></>, "w-[25px]"],
  ["Center", <><path d="M7.500 0v16M0 8.500h15" stroke="#9a9a9a" /><rect x="3.500" y="4.500" width="8" height="8" fill="none" stroke="#9a9a9a" /></>, "w-[23px]"],
];

const well = "flex h-5 items-center border-t-2 border-l-2 border-[#808080] border-r border-r-white";

function StatusBar() {
  return (
    <footer className="flex h-[30px] shrink-0 items-center border-t-2 border-white pl-[5px]">
      <span className="flex-1 pt-0.5">Prints the Diagram/Print Region/Design/</span>
      <div className="flex self-end pb-px">
        {statusIcons.map(([label, art, w]) => (
          <button key={label} type="button" aria-label={label} className={"flex " + w}>
            <svg width="16" height="16" viewBox="0 0 16 16">{art}</svg>
          </button>
        ))}
      </div>
      <div className="flex gap-1 self-end pr-[5px]">
        <div className={well + " w-[141px] pl-[5px]"}>
          <button type="button" aria-label="Run" className="flex">
            <svg width="12" height="15" viewBox="0 0 12 15"><path d="M0 0v15l12-7.500z" fill="#4f4f55" /></svg>
          </button>
        </div>
        <div className={well + " w-[121px]"}>Select Count:0</div>
        <div className={well + " w-[251px] font-bold"}>712.47,421.67</div>
        <div className={well + " w-5 justify-center"}>
          <svg width="12" height="16" viewBox="0 0 12 16" aria-hidden="true">
            <path d="M1 15V9q0-2 5-2t5 2v6z" fill="#6cae74" stroke="#4c8a54" />
            <circle cx="6" cy="4" r="3.400" fill="#dcc078" stroke="#a88c48" />
          </svg>
        </div>
        <div className={well + " w-[61px] justify-center"}>EN</div>
      </div>
    </footer>
  );
}

export default function App() {
  return (
    <div className="flex h-screen flex-col overflow-hidden bg-[#f0f0f0] font-['DejaVu_Sans_Condensed','DejaVu_Sans',sans-serif] text-[11px] text-black">
      <MenuBar />
      <Ribbon />
      <main className="flex min-h-0 flex-1">
        <LeftPanel />
        <div className="w-1 shrink-0 pt-1">
          <svg width="4" height="18" viewBox="0 0 4 18" aria-hidden="true">
            <path d="M3 0v6L0 3zM0 12v6l3-3z" fill="#000" />
          </svg>
        </div>
        <div className="flex min-w-0 flex-1 flex-col">
          <DiagramWindow />
          <MetricsPanel />
        </div>
      </main>
      <StatusBar />
    </div>
  );
}
